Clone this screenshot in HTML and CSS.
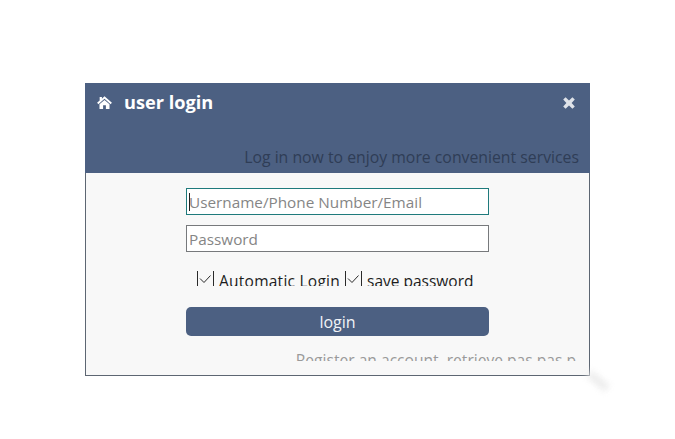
FILE: index.html
```html
<!DOCTYPE html>
<html>
<head>
  <meta charset="utf-8">
  <title>user login</title>
  <link rel="stylesheet" href="styles.css">
</head>
<body>
  <div class="dialog">
    <div class="header">
      <div class="title-row">
        <svg class="home" viewBox="0 0 16 14" width="15" height="13">
          <path d="M8 0.4 L16 7.4 L14.6 8.8 L8 3 L1.4 8.8 L0 7.4 L2.8 4.9 V1 H5.2 V2.9 Z"/>
          <path d="M8 4.2 L13.4 8.9 V14 H9.5 V10 H6.5 V14 H2.6 V8.9 Z"/>
        </svg>
        <span class="title">user login</span>
        <svg class="close" viewBox="0 0 12 12" width="12" height="12">
          <path d="M2.6 0.2 L6 3.4 L9.4 0.2 L11.8 2.6 L8.6 6 L11.8 9.4 L9.4 11.8 L6 8.6 L2.6 11.8 L0.2 9.4 L3.4 6 L0.2 2.6 Z"/>
        </svg>
      </div>
      <div class="subtitle">Log in now to enjoy more convenient services</div>
    </div>
    <div class="body">
      <div class="field focused">
        <input type="text" placeholder="Username/Phone Number/Email">
        <span class="caret"></span>
      </div>
      <div class="field">
        <input type="text" placeholder="Password">
      </div>
      <div class="options">
        <label class="option">
          <svg class="check" viewBox="0 0 17 15" width="17" height="15">
            <path d="M0.5 0 V15 M16.5 0 V15" />
            <path d="M3 7.5 L7 11.5 L13.5 4.5" />
          </svg>
          <span class="wide">Automatic Login</span>
        </label>
        <label class="option">
          <svg class="check" viewBox="0 0 17 15" width="17" height="15">
            <path d="M0.5 0 V15 M16.5 0 V15" />
            <path d="M3 7.5 L7 11.5 L13.5 4.5" />
          </svg>
          <span>save password</span>
        </label>
      </div>
      <button class="login">login</button>
      <div class="links">Register an account, retrieve pas pas p</div>
    </div>
  </div>
  <div class="smudge"></div>
</body>
</html>
```

FILE: styles.css
```css
* {
  box-sizing: border-box;
}
body {
  margin: 0;
  padding: 83px 0 0 85px;
  height: 439px;
  overflow: hidden;
  background: #fff;
  font-family: "Open Sans", "Noto Sans", sans-serif;
}
.dialog {
  width: 505px;
  height: 293px;
  display: flex;
  flex-direction: column;
  border: 1px solid #5d6672;
  border-top: 0;
  background: #f8f8f8;
}
.header {
  height: 90px;
  margin: 0 -1px;
  padding: 7px 11px 2px 12px;
  background: #4c6082;
  display: flex;
  flex-direction: column;
  justify-content: space-between;
}
.title-row {
  display: flex;
  align-items: center;
  height: 24px;
}
.home {
  fill: #fff;
}
.title {
  margin-left: 12px;
  color: #fff;
  font-size: 18.2px;
  font-weight: 700;
}
.close {
  margin: 2px 4px 0 auto;
  fill: #dfe3e9;
}
.subtitle {
  height: 26px;
  text-align: right;
  color: #2f3d56;
  font-size: 15.8px;
  line-height: 24px;
  white-space: nowrap;
}
.body {
  position: relative;
  flex: 1;
  padding: 15px 0 0 100px;
  overflow: hidden;
}
.field {
  position: relative;
  width: 303px;
  height: 27px;
  margin-bottom: 10px;
}
.field input {
  display: block;
  width: 100%;
  height: 100%;
  padding: 0 2px;
  border: 1px solid #77797c;
  outline: 0;
  border-radius: 0;
  background: #fff;
  font-family: inherit;
  font-size: 15.3px;
}
.field input::placeholder {
  color: #858585;
  opacity: 1;
}
.field.focused input {
  border-color: #1f7a7c;
}
.caret {
  position: absolute;
  left: 3px;
  top: 5px;
  width: 1px;
  height: 18px;
  background: #222;
}
.options {
  display: flex;
  height: 15px;
  margin-top: 19px;
  margin-left: 11px;
  overflow: hidden;
  color: #1c1c1c;
  font-size: 15.5px;
  line-height: 20px;
}
.option {
  display: flex;
  margin-right: 5px;
}
.option span {
  margin-left: 5px;
  white-space: nowrap;
}
.option .wide {
  letter-spacing: .25px;
}
.check {
  fill: none;
  stroke: #2a2a2a;
  stroke-width: 1;
}
.login {
  display: block;
  width: 303px;
  height: 29px;
  margin-top: 21px;
  padding: 0;
  border: 0;
  border-radius: 5px;
  background: #4c6082;
  color: #f1f3f6;
  font-family: inherit;
  font-size: 16px;
}
.links {
  height: 11px;
  margin-top: 14px;
  width: 390px;
  overflow: hidden;
  text-align: right;
  color: #9a9a9a;
  font-size: 15.6px;
  line-height: 20px;
  white-space: nowrap;
}
.smudge {
  position: absolute;
  left: 586px;
  top: 377px;
  width: 24px;
  height: 8px;
  background: #ececec;
  filter: blur(3px);
  transform: rotate(40deg);
}
```
